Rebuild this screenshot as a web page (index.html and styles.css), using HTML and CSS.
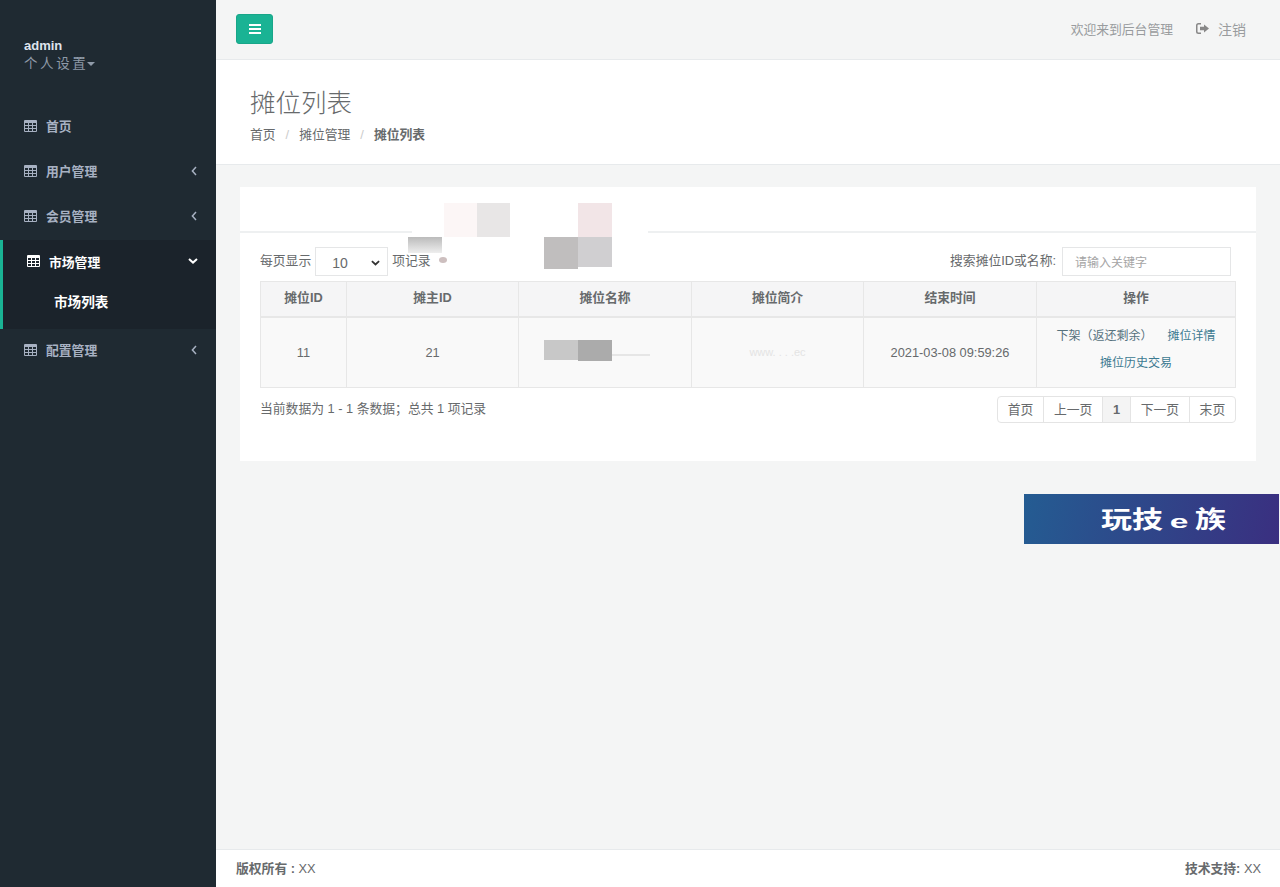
FILE: index.html
```html
<!DOCTYPE html>
<html lang="zh">
<head>
<meta charset="utf-8">
<title>摊位列表</title>
<link rel="stylesheet" href="styles.css">
</head>
<body>
<svg class="defs" width="0" height="0" aria-hidden="true">
  <symbol id="i-table" viewBox="0 0 13 12">
    <path fill="currentColor" fill-rule="evenodd" d="M1 0h11a1 1 0 0 1 1 1v10a1 1 0 0 1-1 1H1a1 1 0 0 1-1-1V1a1 1 0 0 1 1-1zM1 3v2h3V3zm4 0v2h3V3zm4 0v2h3V3zM1 6v2h3V6zm4 0v2h3V6zm4 0v2h3V6zM1 9v2h3V9zm4 0v2h3V9zm4 0v2h3V9z"/>
  </symbol>
  <symbol id="i-left" viewBox="0 0 6 10">
    <path fill="none" stroke="currentColor" stroke-width="1.5" d="M5 1 1.4 5 5 9"/>
  </symbol>
</svg>
<div class="app">
  <aside class="sidebar">
    <div class="profile">
      <div class="profile-name">admin</div>
      <div class="profile-link">个人设置<span class="caret"></span></div>
    </div>
    <ul class="nav">
      <li class="nav-item"><svg class="nav-icon"><use href="#i-table"/></svg><span>首页</span></li>
      <li class="nav-item"><svg class="nav-icon"><use href="#i-table"/></svg><span>用户管理</span><svg class="nav-arrow"><use href="#i-left"/></svg></li>
      <li class="nav-item"><svg class="nav-icon"><use href="#i-table"/></svg><span>会员管理</span><svg class="nav-arrow"><use href="#i-left"/></svg></li>
      <li class="nav-group">
        <div class="nav-item nav-item-open"><svg class="nav-icon"><use href="#i-table"/></svg><span>市场管理</span>
          <svg class="nav-down" viewBox="0 0 10 6"><path fill="none" stroke="currentColor" stroke-width="2" d="M1 1l4 3.6L9 1"/></svg></div>
        <div class="nav-sub">市场列表</div>
      </li>
      <li class="nav-item"><svg class="nav-icon"><use href="#i-table"/></svg><span>配置管理</span><svg class="nav-arrow"><use href="#i-left"/></svg></li>
    </ul>
  </aside>
  <div class="page">
    <header class="topbar">
      <button class="menu-btn" type="button" aria-label="菜单">
        <svg viewBox="0 0 12 10" width="12" height="10"><path fill="#fff" d="M0 0h12v2H0zM0 4h12v2H0zM0 8h12v2H0z"/></svg>
      </button>
      <div class="topbar-right">
        <span>欢迎来到后台管理</span>
        <span class="logout">
          <svg viewBox="0 0 13 11" width="13" height="11"><path fill="#888" d="M5 0v1.500H2.500a1 1 0 0 0-1 1v6a1 1 0 0 0 1 1H5V11H2.500A2.500 2.500 0 0 1 0 8.500v-6A2.500 2.500 0 0 1 2.500 0zM8 1.500l5 4-5 4V7.300H4V3.700h4z"/></svg>
          注销
        </span>
      </div>
    </header>
    <section class="heading">
      <h2>摊位列表</h2>
      <ol class="crumbs">
        <li>首页</li>
        <li class="sep">/</li>
        <li>摊位管理</li>
        <li class="sep">/</li>
        <li class="crumb-active">摊位列表</li>
      </ol>
    </section>
    <main class="content">
      <div class="card">
        <div class="card-title"></div>
        <div class="card-body">
          <div class="toolbar">
            <div class="length">每页显示
              <span class="select"><span>10</span>
                <svg viewBox="0 0 10 6" width="9" height="6"><path fill="none" stroke="#333" stroke-width="2" d="M1 1l4 3.600L9 1"/></svg>
              </span>
              项记录</div>
            <div class="search">搜索摊位ID或名称:
              <input class="search-input" type="text" placeholder="请输入关键字">
            </div>
          </div>
          <table class="grid">
            <thead>
              <tr>
                <th class="c1">摊位ID</th><th class="c2">摊主ID</th><th class="c3">摊位名称</th><th class="c4">摊位简介</th><th class="c5">结束时间</th><th>操作</th>
              </tr>
            </thead>
            <tbody>
              <tr>
                <td>11</td><td>21</td><td></td><td class="faint">www. . . .ec</td><td>2021-03-08 09:59:26</td>
                <td class="ops">
                  <div class="ops-line"><a class="op-plain">下架（返还剩余）</a><a class="op-gap">摊位详情</a></div>
                  <div class="ops-line"><a>摊位历史交易</a></div>
                </td>
              </tr>
            </tbody>
          </table>
          <div class="footer-row">
            <div>当前数据为 1 - 1 条数据；总共 1 项记录</div>
            <ul class="pager">
              <li>首页</li><li>上一页</li><li class="pager-on">1</li><li>下一页</li><li>末页</li>
            </ul>
          </div>
        </div>
        <div class="mosaic">
          <i class="m m-white"></i>
          <i class="m m-low"></i>
          <i class="m m-rule"></i>
          <i class="m m-a"></i>
          <i class="m m-b"></i>
          <i class="m m-c"></i>
          <i class="m m-d"></i>
          <i class="m m-e"></i>
          <i class="m m-f"></i>
          <i class="m m-g"></i>
          <i class="m m-h"></i>
          <i class="m m-i"></i>
          <i class="m m-dot"></i>
        </div>
      </div>
      <div class="stamp"><span class="stamp-text">玩技<small>e</small>族</span></div>
    </main>
    <footer class="foot">
      <div><b>版权所有 :</b> XX</div>
      <div><b>技术支持:</b> XX</div>
    </footer>
  </div>
</div>
</body>
</html>
```
FILE: styles.css
```css
* { box-sizing: border-box; }
html, body { margin: 0; padding: 0; height: 100%; }
body {
  font-family: "Liberation Sans", "Noto Sans CJK SC", sans-serif;
  font-size: 12.800px;
  color: #676a6c;
  background: #f4f5f5;
  overflow: hidden;
}
.defs { position: absolute; }
.app { display: flex; height: 887px; }

/* sidebar */
.sidebar { width: 216px; flex: none; background: #1f2a32; color: #a7b1c2; }
.profile { height: 103px; padding: 38px 0 0 24px; }
.profile-name { color: #dfe4ed; font-weight: 700; font-size: 13px; line-height: 15px; }
.profile-link { font-size: 13.500px; line-height: 20px; margin-top: 1px; letter-spacing: 2.600px; color: #8f9aa8; display: flex; align-items: center; }
.caret { width: 0; height: 0; margin-left: -1px; border: 4px solid transparent; border-top-color: #8f9aa8; border-bottom: 0; }
.nav { list-style: none; margin: 0; padding: 0; }
.nav-item { display: flex; align-items: center; height: 45px; padding: 0 19px 0 24px; font-weight: 700; color: #a7b1c2; }
.nav-icon { width: 13px; height: 12px; margin-right: 9px; flex: none; }
.nav-arrow { width: 6px; height: 10px; margin: 1px 0 0 auto; }
.nav-group { height: 89px; margin: 2px 0 -2px; background: #1b232b; border-left: 3px solid #1ab394; }
.nav-item-open { height: 42px; padding: 0 18px 0 24px; color: #fff; }
.nav-down { width: 10px; height: 6px; margin-left: auto; }
.nav-sub { padding-left: 51px; color: #fff; font-weight: 700; font-size: 13.600px; line-height: 20px; margin-top: 11px; }

/* page */
.page { flex: 1; min-width: 0; display: flex; flex-direction: column; }
.topbar { height: 60px; flex: none; display: flex; align-items: center; justify-content: space-between; padding: 0 34px 2px 20px; border-bottom: 1px solid #e7eaec; background: #f4f5f5; }
.menu-btn { width: 37px; height: 30px; display: flex; align-items: center; justify-content: center; padding: 0; background: #1ab394; border: 1px solid #18a689; border-radius: 3px; }
.topbar-right { display: flex; align-items: center; gap: 23px; color: #999c9e; }
.logout { display: flex; align-items: center; gap: 9px; font-size: 14px; }

.heading { height: 105px; flex: none; padding: 26px 34px 0; background: #fff; border-bottom: 1px solid #e7eaec; }
.heading h2 { margin: 0; font-size: 25.500px; line-height: 34px; font-weight: 300; color: #676a6c; }
.crumbs { display: flex; list-style: none; margin: 6px 0 0; padding: 0; line-height: 18px; }
.sep { margin: 0 10px; color: #ccc; }
.crumb-active { font-weight: 700; }

.content { flex: 1; position: relative; padding: 22px 24px 0; }
.card { position: relative; height: 274px; background: #fff; }
.card-title { height: 46px; border-bottom: 2px solid #eef0f1; }
.card-body { padding: 14px 20px 0; }
.toolbar { display: flex; align-items: flex-start; justify-content: space-between; height: 29px; padding-right: 5px; line-height: 27px; }
.length { display: flex; align-items: flex-start; gap: 4px; }
.select { width: 73px; height: 29px; padding: 3px 7px 0 16px; display: flex; align-items: center; justify-content: space-between; border: 1px solid #e5e6e7; font-size: 14px; background: #fff; }
.search { display: flex; align-items: flex-start; gap: 6px; }
.search-input { width: 169px; height: 29px; padding: 2px 12px 0; border: 1px solid #e5e6e7; font: inherit; font-size: 12px; outline: 0; }
.search-input::placeholder { color: #a5a5a5; opacity: 1; }

.grid { width: 976px; margin-top: 5px; border-collapse: collapse; table-layout: fixed; border: 1px solid #e7e7e7; }
.grid th, .grid td { border: 1px solid #e7e7e7; text-align: center; padding: 0; }
.grid th { height: 35px; padding-bottom: 4px; background: #f5f5f6; border-bottom-width: 2px; font-weight: 700; color: #676a6c; }
.grid td { height: 71px; background: #f9f9f9; }
.c1 { width: 86px; } .c2 { width: 172px; } .c3 { width: 173px; } .c4 { width: 172px; } .c5 { width: 173px; }
.grid .faint { color: #e4e4e4; font-size: 11px; }
.grid .ops { font-size: 12px; color: #3c7a91; vertical-align: top; padding-top: 5px; }
.ops-line { line-height: 27px; }
.op-plain { color: #55717d; }
.op-gap { margin-left: 15px; }

.footer-row { display: flex; justify-content: space-between; align-items: flex-start; padding-top: 8px; line-height: 26px; }
.pager { display: flex; list-style: none; margin: 0; padding: 0; border: 1px solid #e4e4e4; border-radius: 4px; height: 27px; line-height: 25px; }
.pager li { padding: 0 9.800px; border-left: 1px solid #e4e4e4; }
.pager li:first-child { border-left: 0; }
.pager-on { background: #f4f4f4; font-weight: 700; }

/* mosaic laid over the redacted content */
.mosaic { position: absolute; inset: 0; pointer-events: none; }
.m { position: absolute; display: block; }
.m-white { left: 172px; top: 16px; width: 236px; height: 34px; background: #fff; }
.m-low { left: 208px; top: 50px; width: 164px; height: 32px; background: #fff; }
.m-rule { left: 372px; top: 44px; width: 36px; height: 3px; background: #fff; }
.m-a { left: 237px; top: 16px; width: 33px; height: 34px; background: #e8e6e6; }
.m-b { left: 338px; top: 16px; width: 34px; height: 34px; background: #f2e5e7; }
.m-c { left: 204px; top: 16px; width: 33px; height: 34px; background: #fcf6f6; }
.m-d { left: 168px; top: 50px; width: 34px; height: 16px; background: linear-gradient(#bbb, #eee); }
.m-e { left: 304px; top: 50px; width: 34px; height: 32px; background: #c0bebe; }
.m-f { left: 338px; top: 50px; width: 34px; height: 30px; background: #d0cfd1; }
.m-g { left: 304px; top: 153px; width: 34px; height: 20px; background: #c8c8c8; }
.m-h { left: 338px; top: 153px; width: 34px; height: 21px; background: #ababab; }
.m-i { left: 372px; top: 167px; width: 38px; height: 2px; background: #e6e6e6; }
.m-dot { left: 199px; top: 70px; width: 8px; height: 6px; border-radius: 50%; background: #cdbfbf; }

.stamp { position: absolute; left: 808px; top: 329px; width: 255px; height: 50px; padding: 2px 0 0 77px; display: flex; align-items: center; font-weight: 700; color: #fff; background: linear-gradient(100deg, #245c92, #3a2f80); }
.stamp-text { display: flex; align-items: flex-end; font-size: 31px; line-height: 36px; transform: scaleY(.76); }
.stamp small { width: 32px; font-size: 24px; line-height: 32px; text-align: center; transform: scaleX(1.400); }

.foot { height: 38px; flex: none; display: flex; align-items: center; justify-content: space-between; padding: 0 19px 3px 20px; background: #fff; border-top: 1px solid #e7eaec; }
.foot b { font-weight: 700; }
```
